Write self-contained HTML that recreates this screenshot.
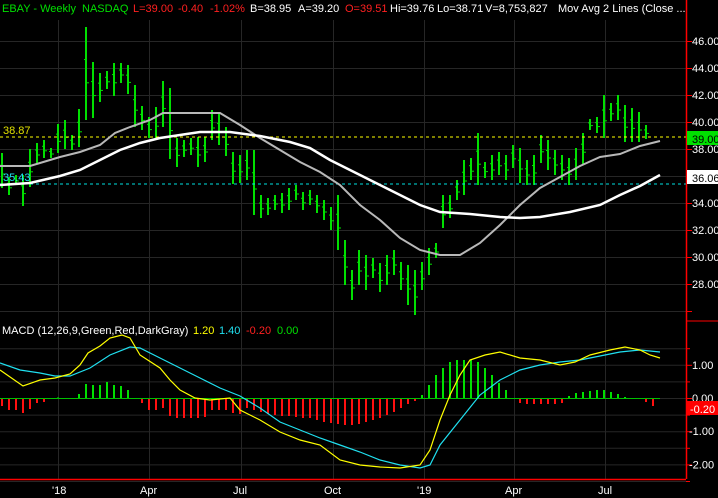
<!DOCTYPE html>
<html><head><meta charset="utf-8"><style>
html,body{margin:0;padding:0;background:#000;}
svg{display:block;font-family:"Liberation Sans",Arial,sans-serif;font-size:11px;}
</style></head><body>
<svg id="s" width="718" height="498" viewBox="0 0 718 498" xmlns="http://www.w3.org/2000/svg">
<rect width="718" height="498" fill="#000"/>
<g id="grid" stroke="#262626" stroke-width="1"></g>
<g id="bars" stroke="#00e000" stroke-width="2"></g>
<g id="hist" stroke-width="2"></g>
<line x1="0" y1="137" x2="686" y2="137" stroke="#ffff00" stroke-dasharray="3,3"/>
<line x1="0" y1="184" x2="686" y2="184" stroke="#00e0e0" stroke-dasharray="3,3"/>
<polyline id="gray" fill="none" stroke="#b8b8b8" stroke-width="2"/>
<polyline id="white" fill="none" stroke="#fff" stroke-width="2.5"/>
<polyline id="sig" fill="none" stroke="#20e0f0" stroke-width="1.2"/>
<polyline id="macd" fill="none" stroke="#ffff00" stroke-width="1.2"/>
<line x1="686.5" y1="0" x2="686.5" y2="479" stroke="#ff0000" stroke-width="1.5"/>
<line x1="0" y1="479.5" x2="686" y2="479.5" stroke="#ff0000" stroke-width="1.5"/>
<line x1="686" y1="321" x2="718" y2="321" stroke="#ff0000"/>
<g id="ticks" stroke="#ff0000"></g>
<g fill="#fff" id="axl"></g>
<rect x="687" y="131" width="31" height="14" fill="#00e000"/>
<text x="692" y="143" fill="#000">39.00</text>
<rect x="687" y="170" width="31" height="14" fill="#fff"/>
<text x="692" y="182" fill="#000">36.06</text>
<rect x="687" y="401" width="31" height="14" fill="#ff0000"/>
<text x="690" y="413" fill="#fff">-0.20</text>
<text x="3" y="134" fill="#e0e000">38.87</text>
<text x="3" y="181" fill="#20e0f0">35.43</text>
<g fill="#fff">
<text x="52" y="494">'18</text><text x="140" y="494">Apr</text><text x="233" y="494">Jul</text>
<text x="324" y="494">Oct</text><text x="417" y="494">'19</text><text x="505" y="494">Apr</text><text x="598" y="494">Jul</text>
</g>
<text x="2" y="334" fill="#fff">MACD (12,26,9,Green,Red,DarkGray)</text>
<text x="193" y="334" fill="#ffff00">1.20</text>
<text x="219" y="334" fill="#20e0f0">1.40</text>
<text x="246" y="334" fill="#ff2020">-0.20</text>
<text x="277" y="334" fill="#00e000">0.00</text>
<g font-size="11">
<text x="2" y="12" fill="#00e000">EBAY - Weekly</text>
<text x="82" y="12" fill="#00e000">NASDAQ</text>
<text x="133" y="12" fill="#ff2020">L=39.00</text>
<text x="178" y="12" fill="#ff2020">-0.40</text>
<text x="210" y="12" fill="#ff2020">-1.02%</text>
<text x="250" y="12" fill="#fff">B=38.95</text>
<text x="298" y="12" fill="#fff">A=39.20</text>
<text x="345" y="12" fill="#ff2020">O=39.51</text>
<text x="390" y="12" fill="#fff">Hi=39.76</text>
<text x="437" y="12" fill="#fff">Lo=38.71</text>
<text x="485" y="12" fill="#fff">V=8,753,827</text>
<text x="558" y="12" fill="#fff">Mov Avg 2 Lines (Close ...</text>
</g>
</svg>
<script>
var NS="http://www.w3.org/2000/svg";
function el(p,t,a){var e=document.createElementNS(NS,t);for(var k in a)e.setAttribute(k,a[k]);document.getElementById(p).appendChild(e);return e;}
[58,149,241,333,424,514,605].forEach(function(x){el('grid','line',{x1:x+.5,y1:20,x2:x+.5,y2:479});});
for(var p=46;p>=26;p-=2){var y=41+(46-p)*13.5;el('grid','line',{x1:0,y1:y+.5,x2:686,y2:y+.5});
 el('ticks','line',{x1:686,y1:y+.5,x2:692,y2:y+.5});
 if(p>=28&&p!=38&&p!=36){var t=el('axl','text',{x:692,y:y+4});t.textContent=p.toFixed(2);}}
(function(){var t=el('axl','text',{x:692,y:153});t.textContent='38.00';})();
for(var v=1.5;v>=-2.5;v-=0.5){var y=398-v*33.2;el('grid','line',{x1:0,y1:y+.5,x2:686,y2:y+.5});
 el('ticks','line',{x1:686,y1:y+.5,x2:(v%1==0?692:690),y2:y+.5});}
[[1,'1.00'],[0,'0.00'],[-1,'-1.00'],[-2,'-2.00']].forEach(function(a){var t=el('axl','text',{x:(a[0]<0?689:692),y:398-a[0]*33.2+4});t.textContent=a[1];});
var B=[[153,188],[177,195],[175,185],[175,206],[149,187],[143,163],[140,158],[148,158],[124,153],[120,149],[135,150],[109,147],[27,120],[62,118],[73,102],[71,89],[63,96],[63,83],[65,94],[85,127],[106,130],[117,138],[107,139],[81,127],[88,159],[138,167],[140,157],[138,155],[137,167],[137,162],[110,140],[112,145],[127,156],[152,184],[155,183],
[150,180],[150,215],[195,218],[198,215],[195,210],[193,213],[188,210],[185,200],[192,210],[190,205],[195,213],[200,220],[207,230],[195,250],[240,285],[270,300],[250,285],[255,290],[258,278],[263,292],[255,285],[250,275],[262,290],[265,305],[270,315],[262,290],[248,275],[243,258],[195,228],[195,218],[180,200],[160,195],[158,180],[133,185],[162,178],[155,180],[152,175],[155,180],[145,168],[148,183],[160,185],[155,185],[135,163],[140,170],[150,175],[155,180],[158,185],[148,180],[133,165],[119,130],[117,133],[95,138],[103,121],[95,120],[105,142],[108,142],[112,142],[125,139]];
B.forEach(function(b,i){var x=2+i*7;el('bars','line',{x1:x,y1:b[0],x2:x,y2:b[1]});
 var o=b[0]+(b[1]-b[0])*0.35,c=b[0]+(b[1]-b[0])*0.6;
 el('bars','line',{x1:x-2,y1:o,x2:x,y2:o,'stroke-width':1});el('bars','line',{x1:x,y1:c,x2:x+3,y2:c,'stroke-width':1});});
function pl(id,pts){document.getElementById(id).setAttribute('points',pts.map(function(p){return p.join(',')}).join(' '));}
pl('gray',[[0,166],[30,166],[40,163],[60,157],[80,152],[100,145],[115,133],[130,127],[150,120],[163,113],[220,113],[240,125],[260,138],[280,150],[300,162],[320,172],[340,185],[360,205],[380,220],[400,238],[420,250],[440,255],[460,255],[480,243],[500,225],[520,205],[540,188],[560,177],[580,166],[600,157],[620,154],[640,146],[660,141]]);
pl('white',[[0,185],[30,183],[60,176],[80,170],[100,160],[120,150],[140,143],[160,138],[180,135],[200,132],[230,132],[260,136],[290,142],[310,148],[330,160],[360,175],[390,190],[420,205],[440,212],[470,214],[500,217],[520,218],[540,217],[570,212],[600,205],[620,195],[640,186],[660,175]]);
pl('macd',[[0,370],[23,386],[40,380],[55,378],[70,374],[80,365],[88,353],[100,346],[110,338],[122,335],[130,338],[140,355],[160,368],[170,380],[180,390],[195,398],[210,400],[230,398],[240,410],[260,420],[280,432],[300,440],[320,445],[340,460],[360,465],[380,467],[400,468],[420,465],[430,450],[440,420],[450,395],[460,375],[470,360],[485,355],[500,352],[520,358],[540,360],[560,365],[575,362],[590,355],[610,350],[625,347],[640,350],[650,355],[660,358]]);
pl('sig',[[0,363],[20,370],[40,373],[55,376],[70,376],[90,368],[110,355],[130,347],[140,348],[160,358],[180,368],[200,378],[220,388],[240,396],[260,408],[280,422],[300,430],[320,438],[340,445],[360,452],[380,460],[400,465],[420,468],[430,465],[440,445],[460,420],[480,395],[500,380],[520,370],[540,365],[560,362],[580,360],[600,356],[620,352],[640,350],[660,352]]);
var H=[406,410,410,413,409,403,402,399,397.5,398,398,394,384,385,385,382,385,386,390,398,403,410,410,408,416,418,418,418,418,417,410,410,410,413,414,
408,410,412,414,415,416,416,417,418,418,420,422,423,424,425,425,424,422,420,418,415,412,408,404,401,395,385,375,368,362,360,360,360,362,368,375,383,390,398,403,404,404,404,404,404,403,396,393,392,391,390,390,392,394,397,398,398,402,406];
H.forEach(function(h,i){var x=2+i*7;el('hist','line',{x1:x,y1:398.5,x2:x,y2:h,stroke:(h<398.5?'#00e000':'#ff1010')});});
el('hist','line',{x1:0,y1:398.5,x2:660,y2:398.5,stroke:'#00c000','stroke-width':1});
</script>
</body></html>
